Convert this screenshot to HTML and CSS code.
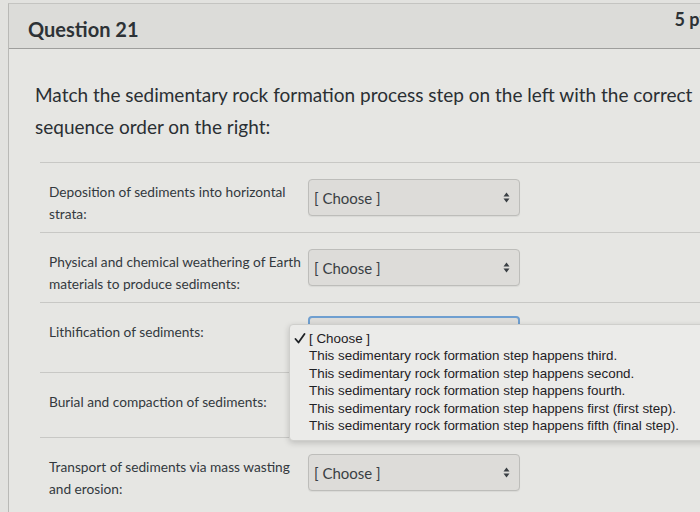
FILE: index.html
```html
<!DOCTYPE html>
<html>
<head>
<meta charset="utf-8">
<link rel="stylesheet" href="styles.css">
</head>
<body>
<div class="card">
  <div class="header">
    <h2 class="title">Question 21</h2>
    <span class="points">5 pts</span>
  </div>
  <div class="body">
    <p class="question">Match the sedimentary rock formation process step on the left with the correct sequence order on the right:</p>
    <div class="answers">
      <div class="row">
        <div class="label">Deposition of sediments into horizontal strata:</div>
        <div class="select"><span>[ Choose ]</span><svg class="arrows" width="7" height="11" viewBox="0 0 7 11"><path d="M3.5 0.5 L6.5 4.5 L0.5 4.5 Z M3.5 10.5 L6.5 6.5 L0.5 6.5 Z" fill="#3a3f44"/></svg></div>
      </div>
      <div class="row">
        <div class="label">Physical and chemical weathering of Earth materials to produce sediments:</div>
        <div class="select"><span>[ Choose ]</span><svg class="arrows" width="7" height="11" viewBox="0 0 7 11"><path d="M3.5 0.5 L6.5 4.5 L0.5 4.5 Z M3.5 10.5 L6.5 6.5 L0.5 6.5 Z" fill="#3a3f44"/></svg></div>
      </div>
      <div class="row open">
        <div class="label">Lithification of sediments:</div>
        <div class="select focused"></div>
        <ul class="menu">
          <li class="checked"><svg class="check" width="12" height="11" viewBox="0 0 12 11"><path d="M1.5 6 L4.5 9.5 L10.5 1" fill="none" stroke="#1e2125" stroke-width="1.8" stroke-linecap="round" stroke-linejoin="round"/></svg>[ Choose ]</li>
          <li>This sedimentary rock formation step happens third.</li>
          <li>This sedimentary rock formation step happens second.</li>
          <li>This sedimentary rock formation step happens fourth.</li>
          <li>This sedimentary rock formation step happens first (first step).</li>
          <li>This sedimentary rock formation step happens fifth (final step).</li>
        </ul>
      </div>
      <div class="row short">
        <div class="label">Burial and compaction of sediments:</div>
        <div class="select"></div>
      </div>
      <div class="row last">
        <div class="label">Transport of sediments via mass wasting and erosion:</div>
        <div class="select"><span>[ Choose ]</span><svg class="arrows" width="7" height="11" viewBox="0 0 7 11"><path d="M3.5 0.5 L6.5 4.5 L0.5 4.5 Z M3.5 10.5 L6.5 6.5 L0.5 6.5 Z" fill="#3a3f44"/></svg></div>
      </div>
    </div>
  </div>
</div>
</body>
</html>
```
FILE: styles.css
```css
html, body {
  margin: 0;
  padding: 0;
  background: #e2e2df;
  overflow: hidden;
  width: 700px;
  height: 512px;
}
body {
  font-family: Lato, "Open Sans", sans-serif;
  color: #2d3b45;
}
.card {
  margin: 3px 0 0 8px;
  width: 725px;
  border-left: 1px solid #b9b9b6;
  border-top: 1px solid #c4c4c1;
  background: #e6e6e3;
  height: 520px;
}
.header {
  height: 44px;
  background: #dcdcd9;
  border-bottom: 1px solid #9e9e9c;
  display: flex;
  justify-content: space-between;
  align-items: center;
  padding: 0 20px 0 19px;
}
.title {
  margin: 6px 0 0 0;
  font-size: 20px;
  font-weight: 700;
  color: #2d3236;
}
.points {
  font-size: 18px;
  font-weight: 700;
  color: #2d3236;
  margin-top: -14px;
  white-space: nowrap;
}
.body {
  padding: 30px 0 0 26px;
}
.question {
  margin: 0;
  font-size: 19px;
  line-height: 32px;
  color: #2a2f33;
  width: 680px;
}
.answers {
  margin: 19px 0 0 5px;
}
.row {
  position: relative;
  display: flex;
  align-items: flex-start;
  height: 69px;
  border-top: 1px solid #c8c8c5;
  padding-left: 9px;
}
.row.short {
  height: 64px;
}
.row.open {
  z-index: 2;
}
.label {
  width: 259px;
  margin-top: 18px;
  font-size: 13.7px;
  line-height: 22px;
  color: #33393e;
}
.select {
  margin: 16px 0 0 0;
  width: 212px;
  height: 37px;
  box-sizing: border-box;
  border: 1px solid #bdbdba;
  border-radius: 4px;
  background: #dddcd9;
  display: flex;
  align-items: center;
  justify-content: space-between;
  padding: 0 9px 0 5px;
  font-size: 15px;
  color: #3a3f44;
  box-shadow: 0 1px 1px rgba(0,0,0,0.06);
}
.select.focused {
  border: 2px solid #6f9fd0;
  margin-top: 13px;
}
.menu {
  position: absolute;
  left: 249px;
  top: 21px;
  margin: 0;
  padding: 5px 0 0 0;
  list-style: none;
  width: 440px;
  height: 110px;
  background: #ebebe9;
  border: 1px solid #cfcfcc;
  border-radius: 4px;
  box-shadow: 0 2px 6px rgba(0,0,0,0.18);
  font-family: "Liberation Sans", Arial, sans-serif;
  font-size: 13.4px;
  line-height: 17.4px;
  color: #1e2125;
}
.menu li {
  padding-left: 19px;
  white-space: nowrap;
}
.menu li.checked {
  padding-left: 4px;
}
.check {
  display: inline-block;
  margin-right: 3px;
  vertical-align: -1px;
}
```
